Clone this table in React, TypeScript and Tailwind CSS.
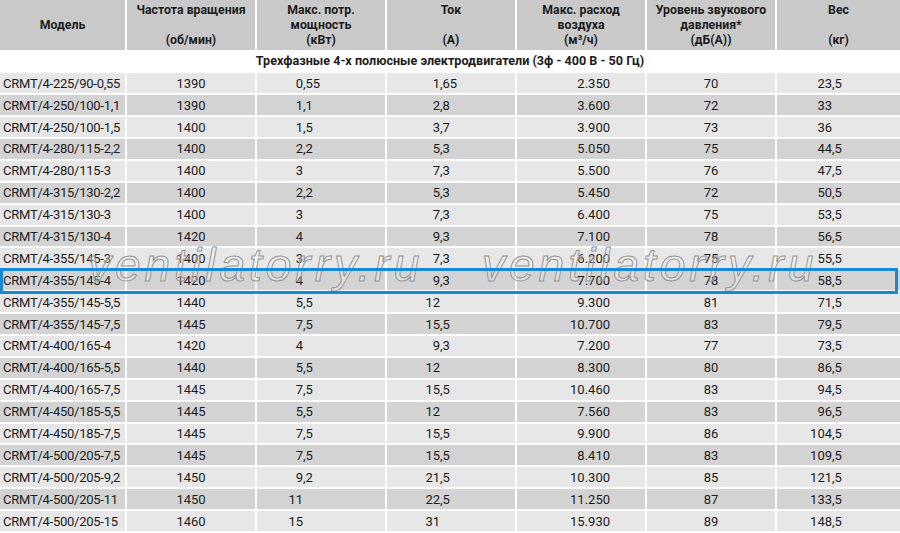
import React from 'react';

type Row = [string, string, string, string, string, string, string];

const rows: Row[] = [
  ['CRMT/4-225/90-0,55', '1390', '0,55', '1,65', '2.350', '70', '23,5'],
  ['CRMT/4-250/100-1,1', '1390', '1,1', '2,8', '3.600', '72', '33'],
  ['CRMT/4-250/100-1,5', '1400', '1,5', '3,7', '3.900', '73', '36'],
  ['CRMT/4-280/115-2,2', '1400', '2,2', '5,3', '5.050', '75', '44,5'],
  ['CRMT/4-280/115-3', '1400', '3', '7,3', '5.500', '76', '47,5'],
  ['CRMT/4-315/130-2,2', '1400', '2,2', '5,3', '5.450', '72', '50,5'],
  ['CRMT/4-315/130-3', '1400', '3', '7,3', '6.400', '75', '53,5'],
  ['CRMT/4-315/130-4', '1420', '4', '9,3', '7.100', '78', '56,5'],
  ['CRMT/4-355/145-3', '1400', '3', '7,3', '6.200', '75', '55,5'],
  ['CRMT/4-355/145-4', '1420', '4', '9,3', '7.700', '78', '58,5'],
  ['CRMT/4-355/145-5,5', '1440', '5,5', '12', '9.300', '81', '71,5'],
  ['CRMT/4-355/145-7,5', '1445', '7,5', '15,5', '10.700', '83', '79,5'],
  ['CRMT/4-400/165-4', '1420', '4', '9,3', '7.200', '77', '73,5'],
  ['CRMT/4-400/165-5,5', '1440', '5,5', '12', '8.300', '80', '86,5'],
  ['CRMT/4-400/165-7,5', '1445', '7,5', '15,5', '10.460', '83', '94,5'],
  ['CRMT/4-450/185-5,5', '1445', '5,5', '12', '7.560', '83', '96,5'],
  ['CRMT/4-450/185-7,5', '1445', '7,5', '15,5', '9.900', '86', '104,5'],
  ['CRMT/4-500/205-7,5', '1445', '7,5', '15,5', '8.410', '83', '109,5'],
  ['CRMT/4-500/205-9,2', '1450', '9,2', '21,5', '10.300', '85', '121,5'],
  ['CRMT/4-500/205-11', '1450', '11', '22,5', '11.250', '87', '133,5'],
  ['CRMT/4-500/205-15', '1460', '15', '31', '15.930', '89', '148,5'],
];

// header cells: three lines each, empty string keeps the middle line blank
const headers: string[][] = [
  ['', 'Модель', ''],
  ['Частота вращения', '', '(об/мин)'],
  ['Макс. потр.', 'мощность', '(кВт)'],
  ['Ток', '', '(А)'],
  ['Макс. расход', 'воздуха', '(м³/ч)'],
  ['Уровень звукового', 'давления*', '(дБ(А))'],
  ['Вес', '', '(кг)'],
];

const cols = 'grid grid-cols-[125px_128px_128px_128px_128px_128px_1fr] gap-x-[2px]';

// values lined up on the decimal comma
function Decimal({ value, intWidth }: { value: string; intWidth: string }) {
  const i = value.indexOf(',');
  const whole = i === -1 ? value : value.slice(0, i);
  const frac = i === -1 ? '' : value.slice(i);
  return (
    <div className="flex items-center h-full">
      <span className={`${intWidth} text-right`}>{whole}</span>
      <span>{frac}</span>
    </div>
  );
}

function Watermark({ className }: { className: string }) {
  return (
    <div
      className={`absolute top-[242px] text-[46px] leading-[46px] italic tracking-[4px] whitespace-nowrap text-white/30 [-webkit-text-stroke:1px_#969696] pointer-events-none ${className}`}
      style={{ fontFamily: '"Liberation Sans", Arial, sans-serif' }}
    >
      ventilatorry.ru
    </div>
  );
}

export default function App() {
  return (
    <div
      className="relative w-[900px] h-[533px] overflow-hidden bg-white text-[#1c1c1c]"
      style={{ fontFamily: 'Roboto, "Liberation Sans", sans-serif' }}
    >
      <div className="flex flex-col gap-y-[2px]">
        {/* Header */}
        <div className={`${cols} h-[50px]`}>
          {headers.map((lines, c) => (
            <div
              key={c}
              className="bg-[#c9c9c9] flex flex-col items-center justify-center text-[12.3px] font-bold leading-[15px]"
            >
              {lines.map((l, k) => (
                <div key={k} className="h-[15px] whitespace-nowrap">
                  {l}
                </div>
              ))}
            </div>
          ))}
        </div>

        {/* Group title */}
        <div className="h-[19.3px] flex items-center justify-center text-[12.6px] font-bold">
          Трехфазные 4-х полюсные электродвигатели (3ф - 400 В - 50 Гц)
        </div>

        {rows.map((r, i) => {
          const bg = i % 2 === 0 ? 'bg-[#e7e7e7]' : 'bg-[#d3d3d3]';
          return (
            <div key={r[0]} className={`${cols} h-[19.9px] text-[13px] leading-none`}>
              <div className={`${bg} flex items-center pl-[3px] whitespace-nowrap tracking-[-0.25px]`}>{r[0]}</div>
              <div className={`${bg} flex items-center justify-center`}>{r[1]}</div>
              <div className={bg}>
                <Decimal value={r[2]} intWidth="w-[46px]" />
              </div>
              <div className={bg}>
                <Decimal value={r[3]} intWidth="w-[53px]" />
              </div>
              <div className={`${bg} flex items-center justify-end pr-[35px]`}>{r[4]}</div>
              <div className={`${bg} flex items-center justify-center`}>{r[5]}</div>
              <div className={bg}>
                <Decimal value={r[6]} intWidth="w-[55px]" />
              </div>
            </div>
          );
        })}
      </div>

      <Watermark className="left-[88px]" />
      <Watermark className="left-[482px]" />

      {/* Selected row */}
      <div className="absolute left-0 top-[268.4px] w-[898px] h-[26px] border-[3px] border-[#1589d2] pointer-events-none" />
    </div>
  );
}
